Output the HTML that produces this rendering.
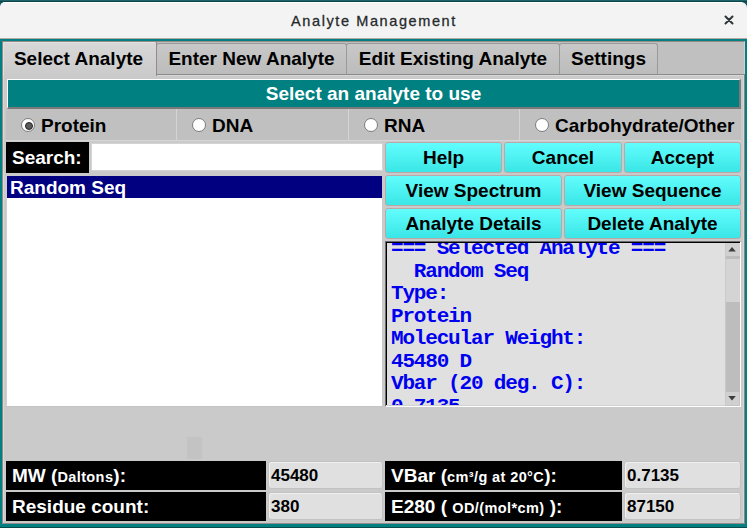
<!DOCTYPE html>
<html><head><meta charset="utf-8">
<style>
*{margin:0;padding:0;box-sizing:border-box}
html,body{width:747px;height:528px;overflow:hidden;background:linear-gradient(#1f6368 0,#1f6368 1px,#0b454c 1px,#0b454c 2px,#0e5a60 2px)}
body{position:relative;font-family:"Liberation Sans",sans-serif}
div,span,svg{position:absolute}
.t{white-space:pre}
#title{left:0;top:2px;width:747px;height:37px;background:#f3f3f3;border-radius:5px 6px 0 0;border-top:1px solid #fff;border-bottom:1px solid #b5aaa5}
#ttext{left:0;top:2px;width:747px;height:38px;line-height:38px;text-align:center;font-size:14.5px;font-weight:normal;color:#1e2426;letter-spacing:1.6px;-webkit-text-stroke:0.3px #2e3436;text-indent:1px}
#frame{left:0;top:39px;width:747px;height:489px;background:#008080}
#content{left:2px;top:41px;width:743px;height:483px;background:#c0c0c0;border-top:1px solid #958a88;border-left:1px solid #958a88;border-right:1px solid #d8d0d0;border-bottom:1px solid #948c8a}
#pane{left:2px;top:74px;width:743px;height:450px;background:#cacaca;border-top:1px solid #8a8a8a;border-right:1px solid #8c8282;border-left:1px solid #958a88;border-bottom:1px solid #948c8a;box-shadow:inset 1px 1px 0 #d8d8d8,inset -1px 0 0 #d6d6d6}
.tab{top:43px;height:31px;background:linear-gradient(#c8c8c8,#bcbcbc);border:1px solid #9a9a9a;border-bottom:none;border-radius:3px 3px 0 0;font-size:19px;font-weight:bold;line-height:29px;text-align:center;color:#000}
.tab.sel{top:41px;height:35px;background:linear-gradient(#d8d8d8,#cacaca);border-color:#958a88;border-bottom:none;line-height:33px;border-radius:2px 2px 0 0;box-shadow:inset 1px 1px 0 #e2e2e2;text-indent:-2px}
#heading{left:7px;top:79px;width:734px;height:30px;background:#008080;color:#fff;font-size:19px;font-weight:bold;line-height:28px;text-align:center;border-top:1px solid #fff;border-left:1px solid #fff;border-bottom:2px solid #7a7a7a;border-right:2px solid #7a7a7a}
#radios{left:6px;top:109px;width:735px;height:32px;background:#c0c0c0;border-bottom:1px solid #d6d6d6}
.sep{top:109px;width:1px;height:31px;background:#d4d4d4}
.rdot{top:118px;width:14px;height:14px;border-radius:50%;background:#fff;border:1px solid #7c7c7c}
.rdot.on:after{content:"";position:absolute;left:3px;top:3px;width:6px;height:6px;border-radius:50%;background:#5a5a5a;border:1px solid #262626}
.rl{top:109px;height:31px;font-size:19px;font-weight:bold;line-height:33px;color:#000}
.btn{height:31px;border-radius:3px;background:linear-gradient(#62fdfd,#3ae6e6);border:1px solid #b8a8a8;font-size:19px;font-weight:bold;line-height:29px;text-align:center;color:#000}
.lbl{background:#000;color:#fff;font-size:19px;font-weight:bold;line-height:30px;padding-left:6px;white-space:pre}
.val{background:#e0e0e0;border:1px solid #c2c2c2;box-shadow:inset 1px 1px 0 #f0f0f0;border-radius:3px;font-size:17px;font-weight:bold;line-height:28px;padding-left:2px;color:#000}
.sm{position:static;font-size:14.5px;letter-spacing:0.4px}
#txt{left:385px;top:241px;width:356px;height:166px;background:#e0e0e0;border-top:1px solid #6c6c6c;border-left:1px solid #6c6c6c;border-right:1px solid #fff;border-bottom:1px solid #fff;overflow:hidden}
#txtin{left:5px;top:-4px;font-family:"Liberation Mono",monospace;font-weight:bold;font-size:21px;letter-spacing:-1.18px;line-height:22.5px;color:#0000f0;white-space:pre}
</style></head><body>
<div id="title"></div>
<div id="ttext">Analyte Management</div>
<svg style="left:723px;top:14px;width:12px;height:12px" viewBox="0 0 12 12"><path d="M2.5 2.5L9.5 9.5M9.5 2.5L2.5 9.5" stroke="#2e3436" stroke-width="2" stroke-linecap="round"/></svg>
<div id="frame"></div>
<div id="content"></div>
<div id="pane"></div>
<div style="left:0;top:527px;width:747px;height:1px;background:#0b4a4c"></div>

<div class="tab" style="left:156px;width:191px">Enter New Analyte</div>
<div class="tab" style="left:346px;width:214px">Edit Existing Analyte</div>
<div class="tab" style="left:559px;width:99px">Settings</div>
<div class="tab sel" style="left:2px;width:155px">Select Analyte</div>

<div id="heading">Select an analyte to use</div>

<div id="radios"></div>
<div class="sep" style="left:176px"></div>
<div class="sep" style="left:348px"></div>
<div class="sep" style="left:519px"></div>
<div class="rdot on" style="left:21px"></div><div class="rl" style="left:41px">Protein</div>
<div class="rdot" style="left:192px"></div><div class="rl" style="left:212px">DNA</div>
<div class="rdot" style="left:364px"></div><div class="rl" style="left:384px">RNA</div>
<div class="rdot" style="left:535px"></div><div class="rl" style="left:555px">Carbohydrate/Other</div>

<div class="lbl" style="left:6px;top:142px;width:83px;height:31px;line-height:31px">Search:</div>
<div style="left:91px;top:143px;width:292px;height:28px;background:#fff;border:1px solid #d4d4d4;border-radius:1px"></div>

<div style="left:6px;top:176px;width:376px;height:230px;background:#fff;border-left:1px solid #cfcfcf"></div>
<div class="t" style="left:7px;top:176px;width:375px;height:22px;background:#000080;color:#fff;font-size:19px;font-weight:bold;line-height:23px;padding-left:3px">Random Seq</div>
<div style="left:6px;top:406px;width:376px;height:1px;background:#c4c4c4"></div>

<div class="btn" style="left:385px;top:142px;width:117px">Help</div>
<div class="btn" style="left:504px;top:142px;width:118px">Cancel</div>
<div class="btn" style="left:624px;top:142px;width:117px">Accept</div>
<div class="btn" style="left:385px;top:175px;width:177px">View Spectrum</div>
<div class="btn" style="left:564px;top:175px;width:177px">View Sequence</div>
<div class="btn" style="left:385px;top:208px;width:177px">Analyte Details</div>
<div class="btn" style="left:564px;top:208px;width:177px">Delete Analyte</div>

<div id="txt"><div id="txtin">=== Selected Analyte ===
  Random Seq
Type:
Protein
Molecular Weight:
45480 D
Vbar (20 deg. C):
0.7135</div></div>
<div style="left:386px;top:242px;width:354px;height:1px;background:#000"></div>
<div style="left:386px;top:242px;width:1px;height:163px;background:#000"></div>
<div style="left:387px;top:405px;width:338px;height:1px;background:#d2d2d2"></div>
<div style="left:725px;top:243px;width:15px;height:163px;background:#bdbdbd;border-left:1px solid #c9c9c9"></div>
<div style="left:726px;top:243px;width:14px;height:13px;background:#d0d0d0"></div>
<svg style="left:726px;top:243px;width:14px;height:13px" viewBox="0 0 14 13"><path d="M2.3 8.5L6 4L9.8 8.5Z" fill="#3c3c3c"/></svg>
<div style="left:726px;top:259px;width:14px;height:43px;background:#d4d4d4"></div>
<div style="left:726px;top:392px;width:14px;height:14px;background:#d0d0d0;border-right:1px solid #c4c4c4;border-bottom:1px solid #c4c4c4"></div>
<svg style="left:726px;top:392px;width:14px;height:13px" viewBox="0 0 14 13"><path d="M2.3 4L9.8 4L6 8.5Z" fill="#3c3c3c"/></svg>

<div style="left:187px;top:437px;width:15px;height:22px;background:#c3c3c3"></div>

<div class="lbl" style="left:6px;top:461px;width:260px;height:29px">MW (<span class="sm">Daltons</span>):</div>
<div class="val" style="left:268px;top:461px;width:115px;height:28px">45480</div>
<div class="lbl" style="left:6px;top:492px;width:260px;height:29px">Residue count:</div>
<div class="val" style="left:268px;top:492px;width:115px;height:28px">380</div>

<div class="lbl" style="left:385px;top:461px;width:237px;height:29px">VBar (<span class="sm">cm³/g at 20°C</span>):</div>
<div class="val" style="left:624px;top:461px;width:117px;height:28px">0.7135</div>
<div class="lbl" style="left:385px;top:492px;width:237px;height:29px">E280 ( <span class="sm">OD/(mol*cm)</span> ):</div>
<div class="val" style="left:624px;top:492px;width:117px;height:28px">87150</div>
</body></html>
